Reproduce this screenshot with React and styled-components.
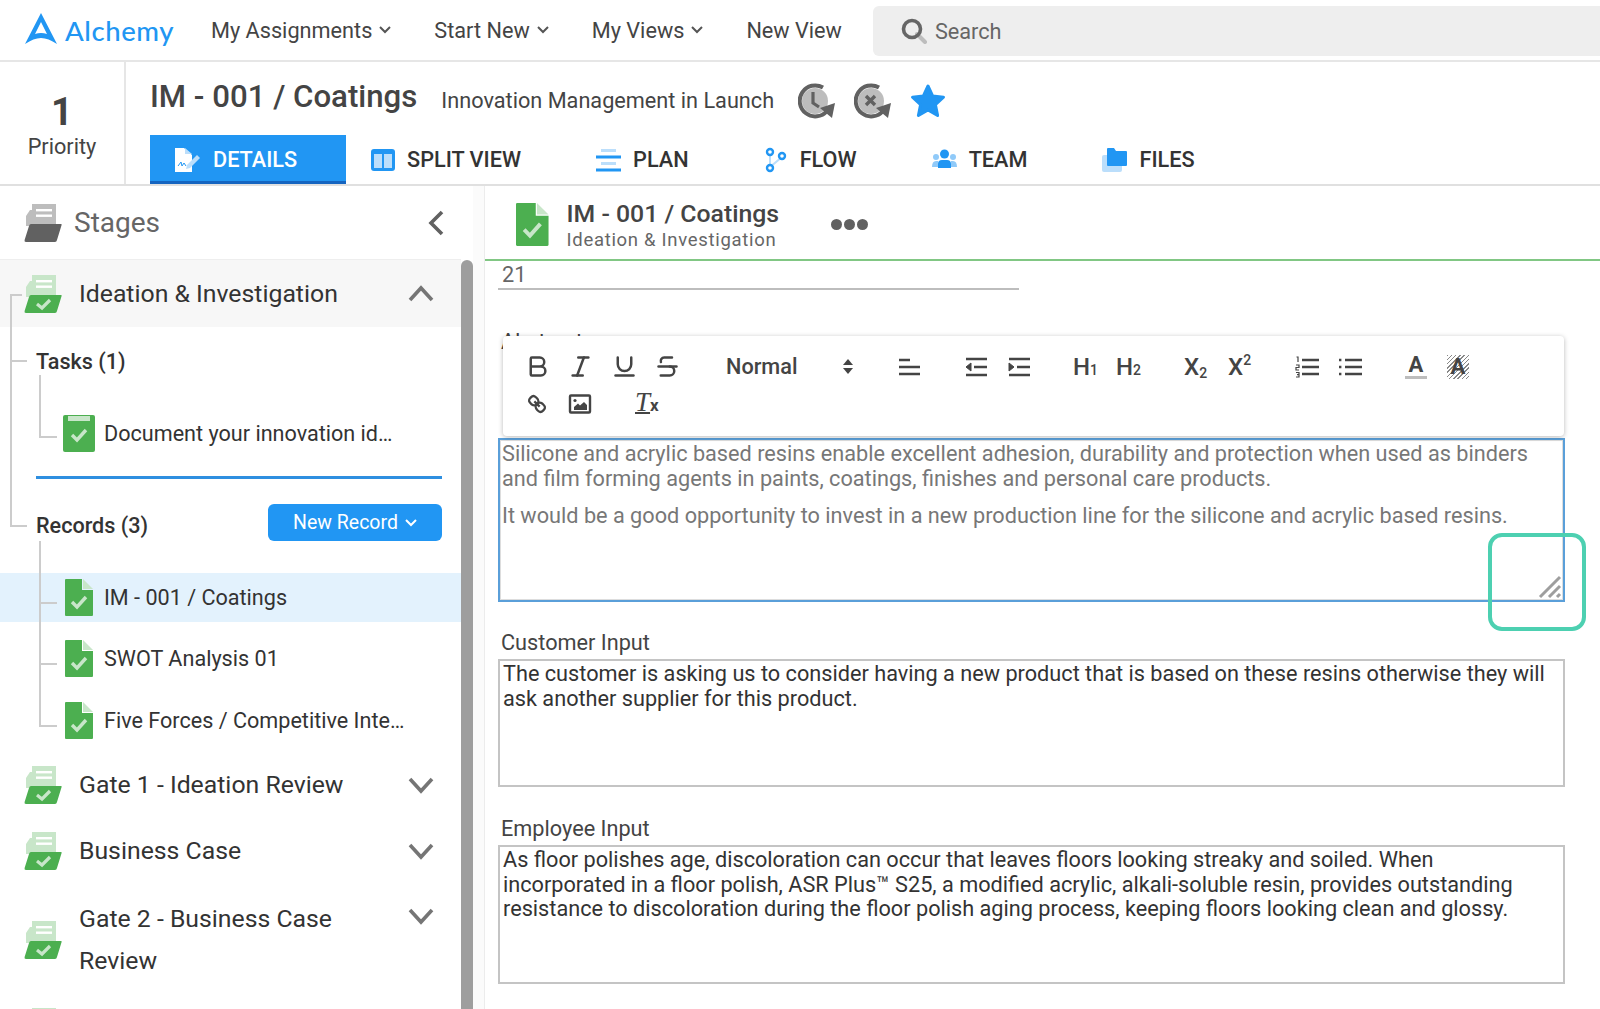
import styled, { createGlobalStyle } from 'styled-components';
import { Bold, Italic, Underline, Strikethrough } from 'lucide-react';

const BLUE = '#2196f3';
const GREEN = '#4caf50';
const PALE = '#c8e6c9';

const GlobalStyle = createGlobalStyle`
    html, body {
        margin: 0;
        padding: 0;
        background: #fff;
    }
    body {
        font-family: Roboto, "Liberation Sans", sans-serif;
        color: #333;
        overflow: hidden;
    }
    * {
        box-sizing: border-box;
    }
`;

function Logo() {
    return (
        <svg width="32" height="32" viewBox="0 0 32 32">
            <path
                fill={BLUE}
                fillRule="evenodd"
                d="M16 0 L32 31 C26 27 21 25 16 25 C11 25 6 27 0 31 Z M16 9 L10 21 C14 19.8 18 19.8 22 21 Z"
            />
        </svg>
    );
}

function SmallChevron({ color = '#555' }) {
    return (
        <svg width="12" height="8" viewBox="0 0 12 8">
            <polyline points="1,1 6,6 11,1" fill="none" stroke={color} strokeWidth="2" />
        </svg>
    );
}

function BigChevron({ up }) {
    return (
        <svg width="26" height="24" viewBox="0 0 26 24">
            <polyline
                points={up ? '2,19 13,7 24,19' : '2,6 13,18 24,6'}
                fill="none"
                stroke="#757575"
                strokeWidth="3.6"
            />
        </svg>
    );
}

function SearchIcon() {
    return (
        <svg width="26" height="26" viewBox="0 0 26 26">
            <line x1="16" y1="16" x2="24" y2="24" stroke="#bdbdbd" strokeWidth="4" strokeLinecap="round" />
            <circle cx="11" cy="11" r="8.5" fill="none" stroke="#666" strokeWidth="3.6" />
        </svg>
    );
}

function RecycleIcon({ cross }) {
    return (
        <svg width="38" height="36" viewBox="0 0 38 36">
            <circle cx="17" cy="18" r="13" fill="#bdbdbd" />
            <path d="M25 4.5 A15.5 15.5 0 1 0 29 28" fill="none" stroke="#616161" strokeWidth="4" />
            <path d="M22 25 L37 20 L34 35 Z" fill="#616161" />
            {cross ? (
                <path d="M12 13 L21 22 M21 13 L12 22" stroke="#616161" strokeWidth="3.4" />
            ) : (
                <path d="M15 9 V20 L21 24" fill="none" stroke="#616161" strokeWidth="3.2" />
            )}
        </svg>
    );
}

function StarIcon() {
    return (
        <svg width="36" height="36" viewBox="0 0 36 36">
            <polygon
                points="18,3 22.6,13 33.5,14.2 25.4,21.6 27.6,32.5 18,27 8.4,32.5 10.6,21.6 2.5,14.2 13.4,13"
                fill={BLUE}
                stroke={BLUE}
                strokeWidth="3"
                strokeLinejoin="round"
            />
        </svg>
    );
}

function DetailsIcon() {
    return (
        <svg width="26" height="24" viewBox="0 0 26 24">
            <path d="M0 0 H9 L17 7 V24 H0 Z" fill="#fff" />
            <path d="M10 0 L17 6 H10 Z" fill="#bbdefb" />
            <path d="M3 18 L6 14 L7 18 L9 15 L11 18" fill="none" stroke={BLUE} strokeWidth="1" />
            <path d="M12 17 L22 7 L25 10 L15 20 L11 21 Z" fill="#bbdefb" />
        </svg>
    );
}

function SplitIcon() {
    return (
        <svg width="24" height="24" viewBox="0 0 24 24">
            <rect y="1" width="24" height="22" rx="3" fill={BLUE} />
            <rect x="3" y="6" width="8" height="14" fill="#bbdefb" />
            <rect x="13" y="6" width="8" height="14" fill="#bbdefb" />
        </svg>
    );
}

function PlanIcon() {
    return (
        <svg width="25" height="24" viewBox="0 0 25 24">
            <rect x="5" y="1" width="15" height="3" fill="#bbdefb" />
            <rect y="7.5" width="25" height="3" fill={BLUE} />
            <rect x="5" y="14" width="15" height="3" fill="#bbdefb" />
            <rect y="20.5" width="25" height="3" fill={BLUE} />
        </svg>
    );
}

function FlowIcon() {
    return (
        <svg width="24" height="26" viewBox="0 0 24 26">
            <path d="M6 6 V20 L18 10" fill="none" stroke="#bbdefb" strokeWidth="2" />
            <circle cx="6" cy="5" r="3" fill="#fff" stroke={BLUE} strokeWidth="2.4" />
            <circle cx="18" cy="9" r="3" fill="#fff" stroke={BLUE} strokeWidth="2.4" />
            <circle cx="6" cy="21" r="3" fill="#fff" stroke={BLUE} strokeWidth="2.4" />
        </svg>
    );
}

function TeamIcon() {
    return (
        <svg width="25" height="24" viewBox="0 0 25 24">
            <circle cx="4" cy="9" r="3" fill="#90caf9" />
            <circle cx="21" cy="9" r="3" fill="#90caf9" />
            <path d="M0 19 Q0 13 4 13 L6 13 L6 19 Z M25 19 Q25 13 21 13 L19 13 L19 19 Z" fill="#90caf9" />
            <circle cx="12.5" cy="6" r="4.5" fill={BLUE} />
            <path d="M6 20 V16 Q6 12 10 12 H15 Q19 12 19 16 V20 Z" fill={BLUE} />
        </svg>
    );
}

function FilesIcon() {
    return (
        <svg width="25" height="24" viewBox="0 0 25 24">
            <rect y="7" width="20" height="17" rx="2" fill="#bbdefb" />
            <path d="M5 1 Q5 0 6 0 H12 L14 3 H24 Q25 3 25 4 V17 Q25 18 24 18 H6 Q5 18 5 17 Z" fill={BLUE} />
        </svg>
    );
}

function StageIcon({ tone = GREEN, pale = PALE }) {
    return (
        <svg width="38" height="38" viewBox="0 0 38 38">
            <path d="M2 12 L6 6 H8 V22 H2 Z" fill={pale} />
            <rect x="8" y="0" width="24" height="21" fill={pale} />
            <rect x="12" y="5" width="16" height="2.4" fill="#fff" />
            <rect x="12" y="10.5" width="16" height="2.4" fill="#fff" />
            <path d="M7 20 H37 Q38 20 37.6 21 L33 36 Q32.6 38 31 38 H2 Q0 38 0.6 36 L5 22 Q5.5 20 7 20 Z" fill={tone} />
            {tone === GREEN && (
                <polyline points="13,29 18,33 26,25" fill="none" stroke={pale} strokeWidth="3.2" />
            )}
        </svg>
    );
}

function DocIcon({ size = 37 }) {
    const width = (size * 28) / 37;
    return (
        <svg width={width} height={size} viewBox="0 0 28 37">
            <path d="M1 0 H17 V11 H28 V36 Q28 37 27 37 H1 Q0 37 0 36 V1 Q0 0 1 0 Z" fill={GREEN} />
            <path d="M18 0 L28 10 H18 Z" fill={PALE} />
            <polyline points="7,23 12,28 21,18" fill="none" stroke={PALE} strokeWidth="3.4" />
        </svg>
    );
}

function ClipboardIcon() {
    return (
        <svg width="32" height="37" viewBox="0 0 32 37">
            <path d="M2 0 H30 Q32 0 32 2 V35 Q32 37 30 37 H2 Q0 37 0 35 V2 Q0 0 2 0 Z" fill={GREEN} />
            <rect x="5" y="1" width="22" height="5" fill={PALE} />
            <polyline points="9,20 14,25 23,15" fill="none" stroke={PALE} strokeWidth="3.4" />
        </svg>
    );
}

function AlignIcon() {
    return (
        <svg width="24" height="24" viewBox="0 0 24 24" fill="none" stroke="#444" strokeWidth="2.4">
            <path d="M2 5 H13 M2 12 H23 M2 19 H23" />
        </svg>
    );
}

function IndentIcon({ out }) {
    return (
        <svg width="24" height="24" viewBox="0 0 24 24" fill="none" stroke="#444" strokeWidth="2.4">
            <path d="M2 4 H23 M2 20 H23 M10 12 H23" />
            <polygon points={out ? '7,8 7,16 2,12' : '2,8 2,16 7,12'} fill="#444" stroke="#444" strokeWidth="1" />
        </svg>
    );
}

function OrderedIcon() {
    return (
        <svg width="24" height="24" viewBox="0 0 24 24" fill="none">
            <path d="M7 5 H24 M7 12 H24 M7 19 H24" stroke="#444" strokeWidth="2.4" />
            <path d="M1.5 2 H3 V7 M1 10 H4 V12.5 H1 V15 H4 M1 17.5 H4 V22 H1 M2 19.7 H4" stroke="#444" strokeWidth="1.2" />
        </svg>
    );
}

function BulletIcon() {
    return (
        <svg width="24" height="24" viewBox="0 0 24 24" fill="none">
            <path d="M7 5 H24 M7 12 H24 M7 19 H24" stroke="#444" strokeWidth="2.4" />
            <path d="M1 5 H3.4 M1 12 H3.4 M1 19 H3.4" stroke="#444" strokeWidth="2.4" />
        </svg>
    );
}

function LinkIcon() {
    return (
        <svg width="24" height="24" viewBox="0 0 18 18" fill="none" stroke="#444" strokeWidth="1.7">
            <line x1="7" y1="7" x2="11" y2="11" />
            <path d="M8.9,4.577a3.476,3.476,0,0,1,.36,4.679A3.476,3.476,0,0,1,4.577,8.9C3.185,7.5,2.035,6.4,4.217,4.217S7.5,3.185,8.9,4.577Z" />
            <path d="M13.423,9.1a3.476,3.476,0,0,0-4.679-.36,3.476,3.476,0,0,0,.36,4.679c1.392,1.392,2.5,2.542,4.679.36S14.815,10.5,13.423,9.1Z" />
        </svg>
    );
}

function ImageIcon() {
    return (
        <svg width="24" height="24" viewBox="0 0 24 24">
            <rect x="2" y="3.5" width="20" height="17" rx="1" fill="none" stroke="#444" strokeWidth="2.4" />
            <circle cx="7" cy="8.5" r="1.6" fill="#444" />
            <polygon points="6,18 6,15 10,11.5 12,13.5 16,10 19,13 19,18" fill="#444" />
        </svg>
    );
}

function ResizeGrip() {
    return (
        <svg width="24" height="24" viewBox="0 0 24 24">
            <path d="M2 22 L22 2 M11 22 L22 11 M19 22 L22 19" stroke="#9e9e9e" strokeWidth="3" />
        </svg>
    );
}

const stageRows = [
    { title: 'Gate 1 - Ideation Review' },
    { title: 'Business Case' },
    { title: 'Gate 2 - Business Case Review', tall: true },
];

const tabs = [
    { label: 'SPLIT VIEW', icon: <SplitIcon /> },
    { label: 'PLAN', icon: <PlanIcon /> },
    { label: 'FLOW', icon: <FlowIcon /> },
    { label: 'TEAM', icon: <TeamIcon /> },
    { label: 'FILES', icon: <FilesIcon /> },
];

function App() {
    return (
        <Page>
            <GlobalStyle />
            <TopBar>
                <Brand>
                    <Logo />
                    <BrandName>Alchemy</BrandName>
                </Brand>
                <NavItem>
                    My Assignments <SmallChevron />
                </NavItem>
                <NavItem>
                    Start New <SmallChevron />
                </NavItem>
                <NavItem>
                    My Views <SmallChevron />
                </NavItem>
                <NavItem>New View</NavItem>
                <SearchBox>
                    <SearchIcon />
                    <span>Search</span>
                </SearchBox>
            </TopBar>

            <RecordBar>
                <PriorityCell>
                    <PriorityNumber>1</PriorityNumber>
                    <PriorityLabel>Priority</PriorityLabel>
                </PriorityCell>
                <RecordMain>
                    <TitleRow>
                        <RecordTitle>IM - 001 / Coatings</RecordTitle>
                        <RecordSubtitle>Innovation Management in Launch</RecordSubtitle>
                        <TitleIcons>
                            <RecycleIcon />
                            <RecycleIcon cross />
                            <StarIcon />
                        </TitleIcons>
                    </TitleRow>
                    <Tabs>
                        <ActiveTab>
                            <DetailsIcon />
                            DETAILS
                        </ActiveTab>
                        {tabs.map(tab => (
                            <Tab key={tab.label}>
                                {tab.icon}
                                {tab.label}
                            </Tab>
                        ))}
                    </Tabs>
                </RecordMain>
            </RecordBar>

            <Body>
                <Sidebar>
                    <SidebarList>
                        <StagesHead>
                            <StageIcon tone="#616161" pale="#bdbdbd" />
                            <StagesTitle>Stages</StagesTitle>
                            <svg width="18" height="26" viewBox="0 0 18 26">
                                <polyline points="15,2 4,13 15,24" fill="none" stroke="#616161" strokeWidth="3.6" />
                            </svg>
                        </StagesHead>
                        <OpenStage>
                            <StageRow $active>
                                <StageIcon />
                                <StageName>Ideation &amp; Investigation</StageName>
                                <ChevronSlot>
                                    <BigChevron up />
                                </ChevronSlot>
                            </StageRow>
                            <GroupRow>
                                <GroupName>Tasks (1)</GroupName>
                            </GroupRow>
                            <TaskList>
                                <ItemRow>
                                    <IconSlot $inset={9}>
                                        <ClipboardIcon />
                                    </IconSlot>
                                    Document your innovation id…
                                </ItemRow>
                            </TaskList>
                            <Divider />
                            <RecordsRow>
                                <GroupName>Records (3)</GroupName>
                                <NewRecord>
                                    New Record <SmallChevron color="#fff" />
                                </NewRecord>
                            </RecordsRow>
                            <RecordList>
                                <ItemRow $selected>
                                    <IconSlot>
                                        <DocIcon />
                                    </IconSlot>
                                    IM - 001 / Coatings
                                </ItemRow>
                                <ItemRow>
                                    <IconSlot>
                                        <DocIcon />
                                    </IconSlot>
                                    SWOT Analysis 01
                                </ItemRow>
                                <ItemRow>
                                    <IconSlot>
                                        <DocIcon />
                                    </IconSlot>
                                    Five Forces / Competitive Inte…
                                </ItemRow>
                            </RecordList>
                        </OpenStage>
                        {stageRows.map(stage => (
                            <StageRow key={stage.title} $tall={stage.tall}>
                                <StageIcon />
                                <StageName>{stage.title}</StageName>
                                <ChevronSlot>
                                    <BigChevron />
                                </ChevronSlot>
                            </StageRow>
                        ))}
                        <StageRow>
                            <StageIcon />
                        </StageRow>
                    </SidebarList>
                    <ScrollThumb />
                    <Gutter />
                </Sidebar>

                <Content>
                    <ContentHead>
                        <DocIcon size={43} />
                        <HeadText>
                            <HeadTitle>IM - 001 / Coatings</HeadTitle>
                            <HeadSub>Ideation &amp; Investigation</HeadSub>
                        </HeadText>
                        <Dots>
                            <i />
                            <i />
                            <i />
                        </Dots>
                    </ContentHead>
                    <Form>
                        <ValueLine>21</ValueLine>
                        <FieldLabel $top={40}>Abstract</FieldLabel>
                        <Toolbar>
                            <ToolLine>
                                <LucideTool $gap={22}>
                                    <Bold size={27} strokeWidth={2.2} />
                                </LucideTool>
                                <LucideTool $gap={19}>
                                    <Italic size={27} strokeWidth={2.2} />
                                </LucideTool>
                                <LucideTool $gap={20}>
                                    <Underline size={27} strokeWidth={2.2} />
                                </LucideTool>
                                <LucideTool $gap={19}>
                                    <Strikethrough size={27} strokeWidth={2.2} />
                                </LucideTool>
                                <NormalPick>Normal</NormalPick>
                                <Updown>
                                    <i />
                                    <b />
                                </Updown>
                                <Tool $gap={44}>
                                    <AlignIcon />
                                </Tool>
                                <Tool $gap={43}>
                                    <IndentIcon out />
                                </Tool>
                                <Tool $gap={19}>
                                    <IndentIcon />
                                </Tool>
                                <TextTool $gap={42}>
                                    H<small>1</small>
                                </TextTool>
                                <TextTool $gap={17}>
                                    H<small>2</small>
                                </TextTool>
                                <TextTool $gap={42}>
                                    X<sub>2</sub>
                                </TextTool>
                                <TextTool $gap={18}>
                                    X<sup>2</sup>
                                </TextTool>
                                <Tool $gap={41}>
                                    <OrderedIcon />
                                </Tool>
                                <Tool $gap={19}>
                                    <BulletIcon />
                                </Tool>
                                <ColorTool $gap={43}>A</ColorTool>
                                <HatchTool $gap={20}>A</HatchTool>
                            </ToolLine>
                            <ToolLine>
                                <Tool $gap={22}>
                                    <LinkIcon />
                                </Tool>
                                <Tool $gap={19}>
                                    <ImageIcon />
                                </Tool>
                                <ClearTool $gap={43}>
                                    <span>T</span>
                                    <small>x</small>
                                </ClearTool>
                            </ToolLine>
                        </Toolbar>
                        <Editor>
                            <p>
                                Silicone and acrylic based resins enable excellent adhesion, durability and protection when used as binders and film forming agents in paints, coatings, finishes and personal care products.
                            </p>
                            <p>
                                It would be a good opportunity to invest in a new production line for the silicone and acrylic based resins.
                            </p>
                            <Grip>
                                <ResizeGrip />
                            </Grip>
                            <Highlight />
                        </Editor>
                        <FieldLabel $top={29}>Customer Input</FieldLabel>
                        <TextBox $height={128} $top={4}>
                            The customer is asking us to consider having a new product that is based on these resins otherwise they will ask another supplier for this product.
                        </TextBox>
                        <FieldLabel $top={30}>Employee Input</FieldLabel>
                        <TextBox $height={139} $top={4}>
                            As floor polishes age, discoloration can occur that leaves floors looking streaky and soiled. When incorporated in a floor polish, ASR Plus™ S25, a modified acrylic, alkali-soluble resin, provides outstanding resistance to discoloration during the floor polish aging process, keeping floors looking clean and glossy.
                        </TextBox>
                    </Form>
                </Content>
            </Body>
        </Page>
    );
}

export default App;

const Page = styled.div`
    width: 1600px;
    height: 1009px;
    overflow: hidden;
    display: flex;
    flex-direction: column;
`;

const TopBar = styled.header`
    height: 62px;
    flex: none;
    display: flex;
    align-items: center;
    gap: 43px;
    padding-left: 25px;
    border-bottom: 2px solid #e6e6e6;
`;

const Brand = styled.div`
    width: 143px;
    flex: none;
    display: flex;
    align-items: center;
    gap: 8px;
    margin-top: -3px;
    svg {
        flex: none;
    }
`;

const BrandName = styled.span`
    font-family: Lato, sans-serif;
    font-size: 27.5px;
    font-weight: 500;
    letter-spacing: 0.6px;
    margin-top: 3px;
    color: ${BLUE};
`;

const NavItem = styled.div`
    flex: none;
    display: flex;
    align-items: center;
    gap: 7px;
    font-size: 21.7px;
    color: #444;
`;

const SearchBox = styled.div`
    flex: 1;
    height: 50px;
    margin-left: -12px;
    margin-top: 2px;
    padding-left: 28px;
    display: flex;
    align-items: center;
    gap: 8px;
    background: #eeeeee;
    border-radius: 6px 0 0 6px;
    font-size: 21.7px;
    color: #666;
`;

const RecordBar = styled.div`
    height: 124px;
    flex: none;
    display: flex;
    border-bottom: 2px solid #e0e0e0;
`;

const PriorityCell = styled.div`
    width: 126px;
    flex: none;
    display: flex;
    flex-direction: column;
    align-items: center;
    padding-top: 28px;
    border-right: 2px solid #e6e6e6;
`;

const PriorityNumber = styled.div`
    font-size: 38px;
    line-height: 44px;
    font-weight: 700;
    color: #444;
`;

const PriorityLabel = styled.div`
    font-size: 21.7px;
    line-height: 26px;
    color: #444;
`;

const RecordMain = styled.div`
    flex: 1;
    padding-left: 24px;
    display: flex;
    flex-direction: column;
`;

const TitleRow = styled.div`
    height: 73px;
    flex: none;
    display: flex;
    align-items: center;
    gap: 24px;
`;

const RecordTitle = styled.h1`
    margin: -4px 0 0;
    font-size: 31.2px;
    font-weight: 500;
    color: #444;
`;

const RecordSubtitle = styled.div`
    font-size: 21.7px;
    margin-top: 3px;
    color: #444;
`;

const TitleIcons = styled.div`
    display: flex;
    align-items: center;
    gap: 18px;
    margin-top: 4px;
`;

const Tabs = styled.nav`
    height: 49px;
    display: flex;
`;

const Tab = styled.div`
    display: flex;
    align-items: center;
    gap: 12px;
    padding-left: 25px;
    margin-right: 50px;
    font-size: 21.7px;
    font-weight: 500;
    color: #333;
`;

const ActiveTab = styled(Tab)`
    width: 196px;
    margin-right: 0;
    padding-top: 3px;
    background: ${BLUE};
    color: #fff;
    border-bottom: 3px solid #1565c0;
`;

const Body = styled.div`
    flex: 1;
    min-height: 0;
    display: flex;
`;

const Sidebar = styled.aside`
    width: 485px;
    flex: none;
    display: flex;
    overflow: hidden;
`;

const SidebarList = styled.div`
    width: 461px;
    flex: none;
`;

const ScrollThumb = styled.div`
    width: 12px;
    margin-top: 74px;
    background: #9e9e9e;
    border-radius: 6px 6px 0 0;
`;

const Gutter = styled.div`
    width: 12px;
    background: #fbfbfb;
    border-right: 1px solid #ececec;
`;

const StagesHead = styled.div`
    height: 74px;
    display: flex;
    align-items: center;
    padding: 0 16px 0 24px;
    border-bottom: 1px solid #eeeeee;
`;

const StagesTitle = styled.div`
    flex: 1;
    margin-left: 12px;
    font-size: 28px;
    color: #666;
`;

const OpenStage = styled.section`
    position: relative;
    margin-bottom: -5px;
    &::before {
        content: '';
        position: absolute;
        z-index: 1;
        left: 10px;
        top: 35px;
        width: 2px;
        height: 231px;
        background: #cccccc;
    }
`;

const ChevronSlot = styled.div`
    flex: none;
    align-self: flex-start;
    height: 24px;
    margin-top: 9px;
`;

const StageRow = styled.div`
    position: relative;
    min-height: ${props => (props.$active ? 67 : 66)}px;
    padding: ${props => (props.$tall ? 14 : 12)}px 27px 12px 24px;
    display: flex;
    align-items: center;
    background: ${props => (props.$active ? '#f7f7f7' : 'transparent')};
    &::before {
        content: ${props => (props.$active ? "''" : 'none')};
        position: absolute;
        left: 10px;
        top: 34px;
        width: 12px;
        height: 2px;
        background: #cccccc;
    }
    > svg {
        flex: none;
    }
    ${ChevronSlot} {
        margin-top: ${props => (props.$tall ? 6 : 9)}px;
    }
`;

const StageName = styled.div`
    flex: 1;
    margin-left: 17px;
    font-size: 24.8px;
    line-height: 42px;
    color: #333;
`;

const GroupRow = styled.div`
    position: relative;
    height: 68px;
    display: flex;
    align-items: center;
    padding-left: 36px;
    &::before {
        content: '';
        position: absolute;
        left: 10px;
        top: 33px;
        width: 17px;
        height: 2px;
        background: #cccccc;
    }
`;

const GroupName = styled.div`
    font-size: 21.6px;
    font-weight: 500;
    color: #333;
`;

const TaskList = styled.div`
    position: relative;
`;

const RecordList = styled.div`
    position: relative;
    &::before {
        content: '';
        position: absolute;
        z-index: 1;
        left: 39px;
        top: -32px;
        width: 2px;
        height: 186px;
        background: #cccccc;
    }
`;

const ItemRow = styled.div`
    position: relative;
    height: 49px;
    margin-bottom: 12.5px;
    display: flex;
    align-items: center;
    font-size: 21.6px;
    color: #333;
    background: ${props => (props.$selected ? '#e3f2fd' : 'transparent')};
    &::after {
        content: '';
        position: absolute;
        left: 39px;
        top: 29px;
        width: 18px;
        height: 2px;
        background: #cccccc;
    }
    ${TaskList} & {
        height: 76px;
        margin-bottom: 0;
    }
    ${TaskList} &::before {
        content: '';
        position: absolute;
        left: 39px;
        top: -20px;
        width: 2px;
        height: 63px;
        background: #cccccc;
    }
    ${TaskList} &::after {
        top: 41px;
    }
`;

const IconSlot = styled.span`
    width: 104px;
    flex: none;
    padding-right: ${props => props.$inset ?? 11}px;
    display: flex;
    justify-content: flex-end;
`;

const Divider = styled.div`
    height: 2.5px;
    margin: 5px 19px 0 36px;
    background: #2e8fe0;
`;

const RecordsRow = styled(GroupRow)`
    height: 94px;
    justify-content: space-between;
    padding-right: 19px;
    &::before {
        top: 46px;
    }
`;

const NewRecord = styled.button`
    width: 174px;
    height: 37px;
    margin-top: -6px;
    border: none;
    border-radius: 6px;
    background: ${BLUE};
    color: #fff;
    font-family: inherit;
    font-size: 19.5px;
    display: flex;
    align-items: center;
    justify-content: center;
    gap: 7px;
`;

const Content = styled.main`
    flex: 1;
    min-width: 0;
    display: flex;
    flex-direction: column;
`;

const ContentHead = styled.div`
    height: 75px;
    flex: none;
    display: flex;
    align-items: center;
    padding: 4px 0 0 31px;
    border-bottom: 2px solid #81c784;
`;

const HeadText = styled.div`
    width: 264px;
    margin: 2px 0 0 18px;
`;

const HeadTitle = styled.div`
    font-size: 24.8px;
    line-height: 30px;
    font-weight: 500;
    color: #444;
`;

const HeadSub = styled.div`
    font-size: 18.5px;
    line-height: 23px;
    letter-spacing: 0.7px;
    color: #666;
`;

const Dots = styled.div`
    display: flex;
    gap: 2px;
    i {
        width: 11px;
        height: 11px;
        border-radius: 50%;
        background: #616161;
    }
`;

const Form = styled.div`
    padding: 0 35px 0 13px;
`;

const ValueLine = styled.div`
    width: 521px;
    height: 29px;
    padding-left: 4px;
    font-size: 21.7px;
    line-height: 28px;
    color: #666;
    border-bottom: 2px solid #bdbdbd;
`;

const FieldLabel = styled.div`
    margin-top: ${props => props.$top}px;
    padding-left: 3px;
    font-size: 21.7px;
    line-height: 24px;
    color: #444;
`;

const Toolbar = styled.div`
    position: relative;
    z-index: 2;
    height: 100px;
    margin: -18px 1px 0 5px;
    padding-top: 12px;
    background: #fff;
    border-radius: 4px;
    box-shadow: 0 1px 5px rgba(0, 0, 0, 0.28);
`;

const ToolLine = styled.div`
    height: 37px;
    display: flex;
    align-items: center;
`;

const Tool = styled.span`
    flex: none;
    width: 24px;
    margin-left: ${props => props.$gap}px;
    color: #444;
    display: flex;
`;

const LucideTool = styled(Tool)`
    svg {
        flex: none;
        margin: 0 -1.5px;
    }
`;

const TextTool = styled(Tool)`
    width: 26px;
    align-items: baseline;
    font-size: 24px;
    line-height: 24px;
    font-weight: 500;
    small,
    sub,
    sup {
        font-size: 14px;
        line-height: 0;
    }
    sub {
        vertical-align: baseline;
        transform: translateY(3px);
    }
    sup {
        vertical-align: baseline;
        transform: translateY(-10px);
    }
`;

const ColorTool = styled(Tool)`
    width: 22px;
    height: 25px;
    font-size: 22px;
    line-height: 22px;
    font-weight: 700;
    justify-content: center;
    border-bottom: 3px solid #bdbdbd;
`;

const HatchTool = styled(Tool)`
    width: 22px;
    height: 24px;
    font-size: 22px;
    line-height: 24px;
    font-weight: 700;
    justify-content: center;
    background: repeating-linear-gradient(135deg, #888 0 1px, #fff 1px 3px);
`;

const ClearTool = styled(Tool)`
    align-items: baseline;
    line-height: 24px;
    span {
        font-family: "Liberation Serif", serif;
        font-style: italic;
        font-size: 27px;
        text-decoration: underline;
        text-decoration-thickness: 2px;
    }
    small {
        font-weight: 700;
        font-size: 17px;
    }
`;

const NormalPick = styled.span`
    flex: none;
    width: 72px;
    margin-left: 47px;
    font-size: 21.7px;
    line-height: 24px;
    font-weight: 500;
    color: #444;
`;

const Updown = styled.span`
    flex: none;
    width: 10px;
    margin-left: 45px;
    display: flex;
    flex-direction: column;
    gap: 3px;
    i,
    b {
        width: 0;
        height: 0;
        border-left: 5px solid transparent;
        border-right: 5px solid transparent;
    }
    i {
        border-bottom: 6px solid #444;
    }
    b {
        border-top: 6px solid #444;
    }
`;

const Editor = styled.div`
    position: relative;
    height: 164px;
    margin-top: 2px;
    padding: 2px 2px;
    border: 2px solid #5a9fd9;
    box-shadow: inset 0 0 0 1px #dddddd;
    font-size: 21.7px;
    line-height: 24.5px;
    color: #777;
    p {
        margin: 0 0 13px;
    }
`;

const Grip = styled.span`
    position: absolute;
    right: 1px;
    bottom: 1px;
    display: flex;
`;

const Highlight = styled.span`
    position: absolute;
    right: -23px;
    bottom: -31px;
    width: 98px;
    height: 98px;
    border: 4px solid #4dd0b1;
    border-radius: 14px;
`;

const TextBox = styled.div`
    height: ${props => props.$height}px;
    margin-top: ${props => props.$top}px;
    padding: 1px 3px 0;
    border: 2px solid #c4c4c4;
    font-size: 21.7px;
    line-height: 24.5px;
    color: #333;
`;
